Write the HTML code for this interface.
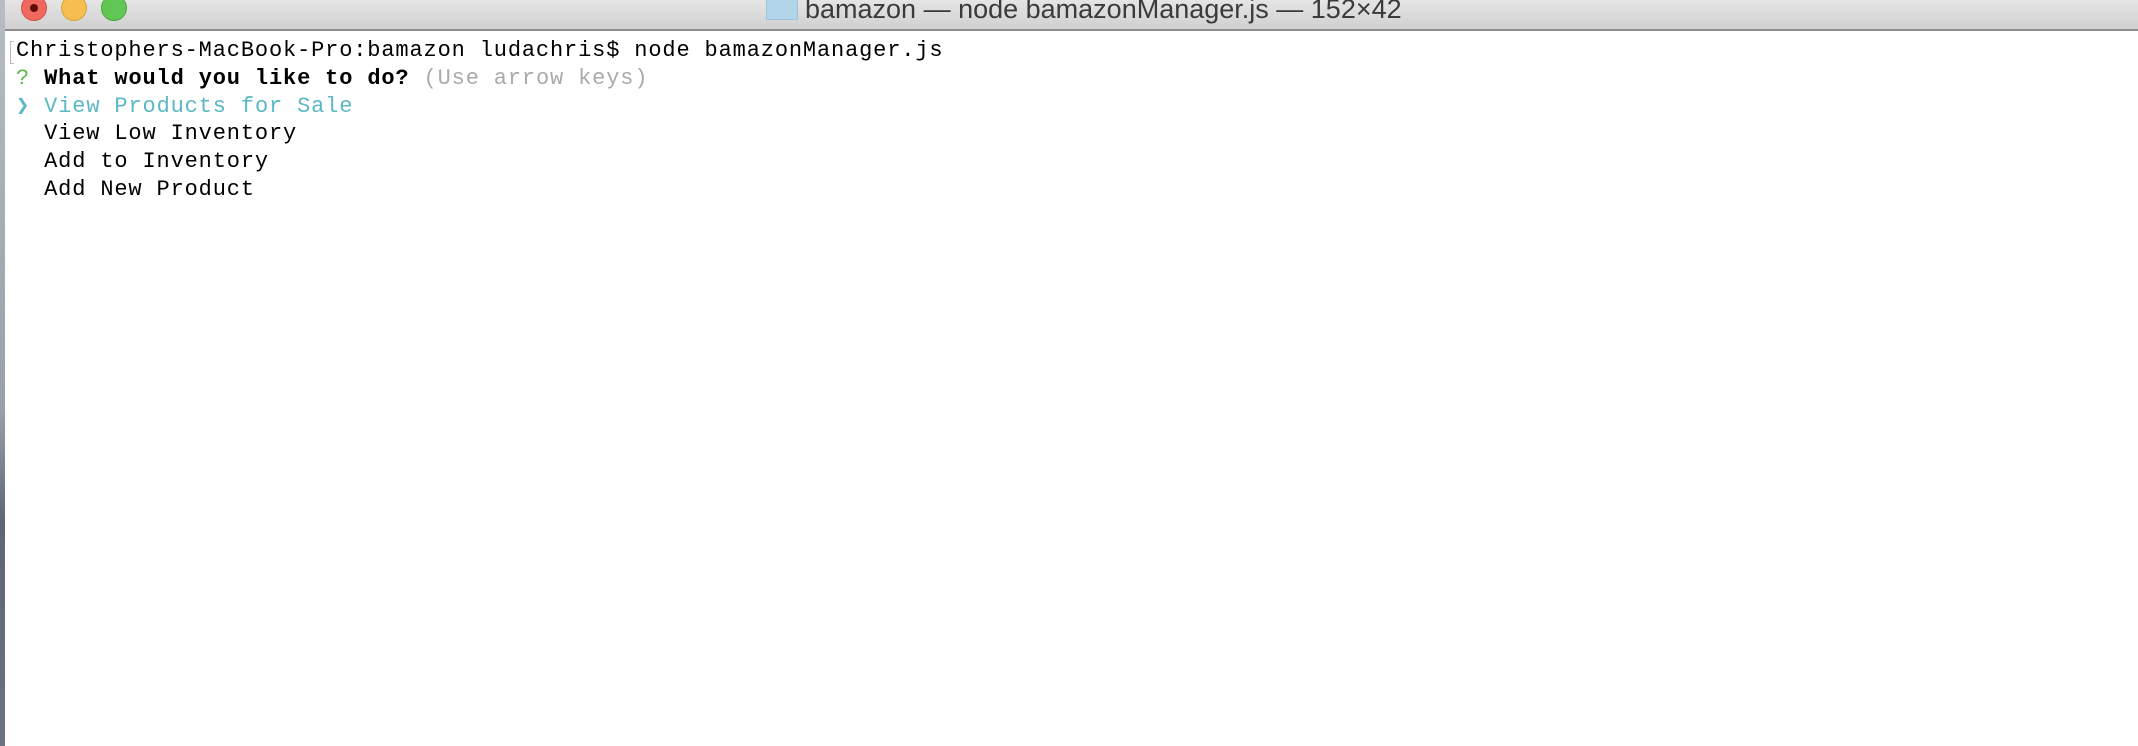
<!DOCTYPE html>
<html><head><style>
html,body{margin:0;padding:0;width:2138px;height:746px;overflow:hidden;background:#fff;}
.strip{position:absolute;left:0;top:0;width:5px;height:746px;background:linear-gradient(#b8bcc2,#9aa0a8 55%,#5c6674 70%,#6a7380);}
.tb{position:absolute;left:5px;top:0;width:2133px;height:29px;background:linear-gradient(#e6e5e6,#d1d0d1);border-bottom:2px solid #8e8e8e;}
.dot{position:absolute;top:-5px;width:24px;height:24px;border-radius:50%;}
.title{position:absolute;left:800px;top:-6px;font:27px "Liberation Sans",sans-serif;color:#3b3b3b;white-space:nowrap;}
.ic{position:absolute;left:761px;top:0;width:30px;height:19px;background:#b3d5ea;border:1px solid #9dc3da;border-top:none;}
.term{position:absolute;left:16px;top:37px;font:22px/27.8px "Liberation Mono",monospace;letter-spacing:0.85px;color:#000;white-space:pre;}
b{font-weight:bold}
</style></head><body>
<div class="strip"></div>
<div class="tb">
<div class="dot" style="left:16px;background:#ee6a5f;border:1px solid #d5544a"><div style="position:absolute;left:8px;top:8px;width:8px;height:8px;border-radius:50%;background:#5e0d07"></div></div>
<div class="dot" style="left:56px;background:#f5be4f;border:1px solid #d9a13a"></div>
<div class="dot" style="left:96px;background:#62c655;border:1px solid #4ba93f"></div>
<div class="ic"></div>
<div class="title">bamazon — node bamazonManager.js — 152×42</div>
</div>
<div style="position:absolute;left:10px;top:41px;width:3px;height:21px;border:1px solid #bbb;border-right:none"></div>
<div class="term">Christophers-MacBook-Pro:bamazon ludachris$ node bamazonManager.js
<span style="color:#5cb84a">?</span> <b>What would you like to do?</b> <span style="color:#aaa">(Use arrow keys)</span>
<span style="color:#5bb8c4"><b>❯</b> View Products for Sale</span>
  View Low Inventory
  Add to Inventory
  Add New Product</div>
</body></html>
